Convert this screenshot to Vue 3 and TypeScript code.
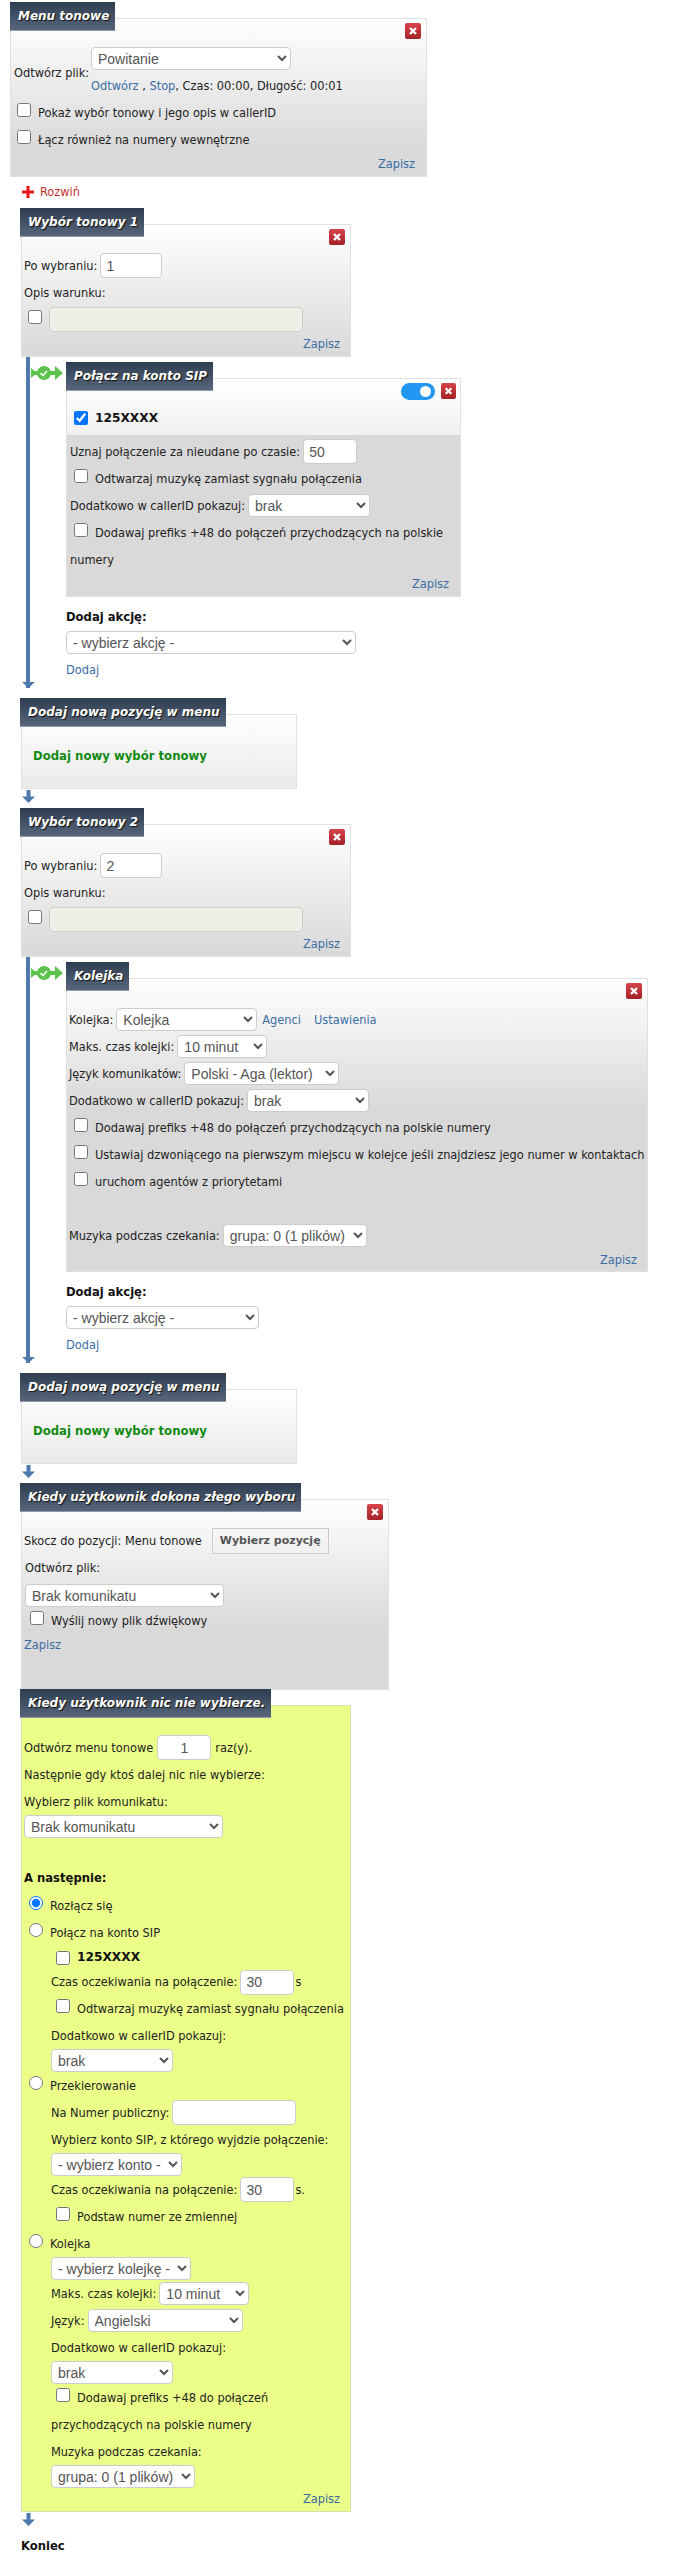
<script setup lang="ts">
const none: string[] = []
void none
</script>

<template>
  <div class="page">
    <div class="block first">
      <div class="title">Menu tonowe</div>
      <div class="panel w417 pad26 p4">
        <span class="close"><svg viewBox="0 0 16 16"><path d="M5 5l6 6M11 5l-6 6" /></svg></span>
        <div class="file">
          <span class="file-label">Odtwórz plik:</span>
          <div>
            <div class="row"><select class="w200"><option>Powitanie</option></select></div>
            <div class="row"><span><a>Odtwórz</a> , <a>Stop</a>, Czas: 00:00, Długość: 00:01</span></div>
          </div>
        </div>
        <div class="row"><input type="checkbox" class="chk m3" /><span>Pokaż wybór tonowy i jego opis w callerID</span></div>
        <div class="row"><input type="checkbox" class="chk m3" /><span>Łącz również na numery wewnętrzne</span></div>
        <div class="save right"><a>Zapisz</a></div>
      </div>
    </div>

    <div class="expand">
      <svg class="plus" viewBox="0 0 12 12"><path d="M4.500 0h3v4.500H12v3H7.500V12h-3V7.500H0v-3h4.500z" /></svg>
      <span>Rozwiń</span>
    </div>

    <div class="block">
      <div class="title">Wybór tonowy 1</div>
      <div class="panel w330 pad27 p3">
        <span class="close"><svg viewBox="0 0 16 16"><path d="M5 5l6 6M11 5l-6 6" /></svg></span>
        <div class="row"><span>Po wybraniu:</span><input class="field w62" value="1" /></div>
        <div class="row">Opis warunku:</div>
        <div class="row"><input type="checkbox" class="chk m4" /><input class="field off w254" disabled /></div>
        <div class="save right"><a>Zapisz</a></div>
      </div>
    </div>

    <div class="sub">
      <svg class="link" viewBox="0 0 32 18"><path class="bar" d="M1 9h26" /><path class="fill" d="M0 4l6 5-6 5z" /><path class="fill" d="M24 2l8 7-8 7z" /><circle class="fill" cx="13" cy="9" r="7" /><path class="tick" d="M9.500 9l2.500 2.500 4-4.500" /></svg>
      <div class="title">Połącz na konto SIP</div>
      <div class="panel w395 sip">
        <span class="toggle"></span>
        <span class="close near"><svg viewBox="0 0 16 16"><path d="M5 5l6 6M11 5l-6 6" /></svg></span>
        <div class="sip-head">
          <input type="checkbox" class="chk m4" checked />
          <b class="num">125XXXX</b>
        </div>
        <div class="sip-body">
          <div class="row"><span>Uznaj połączenie za nieudane po czasie:</span><input class="field w54" value="50" /></div>
          <div class="row"><input type="checkbox" class="chk m4" /><span>Odtwarzaj muzykę zamiast sygnału połączenia</span></div>
          <div class="row"><span>Dodatkowo w callerID pokazuj:</span><select class="w122"><option>brak</option></select></div>
          <div class="row"><input type="checkbox" class="chk m4" /><span>Dodawaj prefiks +48 do połączeń przychodzących na polskie</span></div>
          <div class="row">numery</div>
          <div class="save right"><a>Zapisz</a></div>
        </div>
      </div>
      <div class="add">
        <div class="row"><b class="strong">Dodaj akcję:</b></div>
        <div class="row tight"><select class="w290"><option>- wybierz akcję -</option></select></div>
        <div class="row link-row"><a>Dodaj</a></div>
      </div>
      <svg class="tip" viewBox="0 0 13 8"><path d="M0 2h13L6.500 8z" /></svg>
    </div>

    <div class="block gap10">
      <div class="title">Dodaj nową pozycję w menu</div>
      <div class="panel w276 new"><b>Dodaj nowy wybór tonowy</b></div>
    </div>
    <svg class="down" viewBox="0 0 13 13"><path d="M4.500 0h4v6.500H13L6.500 13 0 6.500h4.500z" /></svg>

    <div class="block gap5">
      <div class="title">Wybór tonowy 2</div>
      <div class="panel w330 pad27 p3">
        <span class="close"><svg viewBox="0 0 16 16"><path d="M5 5l6 6M11 5l-6 6" /></svg></span>
        <div class="row"><span>Po wybraniu:</span><input class="field w62" value="2" /></div>
        <div class="row">Opis warunku:</div>
        <div class="row"><input type="checkbox" class="chk m4" /><input class="field off w254" disabled /></div>
        <div class="save right"><a>Zapisz</a></div>
      </div>
    </div>

    <div class="sub">
      <svg class="link" viewBox="0 0 32 18"><path class="bar" d="M1 9h26" /><path class="fill" d="M0 4l6 5-6 5z" /><path class="fill" d="M24 2l8 7-8 7z" /><circle class="fill" cx="13" cy="9" r="7" /><path class="tick" d="M9.500 9l2.500 2.500 4-4.500" /></svg>
      <div class="title">Kolejka</div>
      <div class="panel w582 pad27 p3">
        <span class="close"><svg viewBox="0 0 16 16"><path d="M5 5l6 6M11 5l-6 6" /></svg></span>
        <div class="row"><span>Kolejka:</span><select class="w141"><option>Kolejka</option></select><a class="after">Agenci</a><a class="after wide">Ustawienia</a></div>
        <div class="row"><span>Maks. czas kolejki:</span><select class="w90"><option>10 minut</option></select></div>
        <div class="row"><span>Język komunikatów:</span><select class="w155"><option>Polski - Aga (lektor)</option></select></div>
        <div class="row"><span>Dodatkowo w callerID pokazuj:</span><select class="w122"><option>brak</option></select></div>
        <div class="row"><input type="checkbox" class="chk m5" /><span>Dodawaj prefiks +48 do połączeń przychodzących na polskie numery</span></div>
        <div class="row"><input type="checkbox" class="chk m5" /><span>Ustawiaj dzwoniącego na pierwszym miejscu w kolejce jeśli znajdziesz jego numer w kontaktach</span></div>
        <div class="row"><input type="checkbox" class="chk m5" /><span>uruchom agentów z priorytetami</span></div>
        <div class="row"></div>
        <div class="row"><span>Muzyka podczas czekania:</span><select class="w144"><option>grupa: 0 (1 plików)</option></select></div>
        <div class="save right short-save"><a>Zapisz</a></div>
      </div>
      <div class="add">
        <div class="row"><b class="strong">Dodaj akcję:</b></div>
        <div class="row tight"><select class="w193"><option>- wybierz akcję -</option></select></div>
        <div class="row link-row"><a>Dodaj</a></div>
      </div>
      <svg class="tip" viewBox="0 0 13 8"><path d="M0 2h13L6.500 8z" /></svg>
    </div>

    <div class="block gap10">
      <div class="title">Dodaj nową pozycję w menu</div>
      <div class="panel w276 new"><b>Dodaj nowy wybór tonowy</b></div>
    </div>
    <svg class="down" viewBox="0 0 13 13"><path d="M4.500 0h4v6.500H13L6.500 13 0 6.500h4.500z" /></svg>

    <div class="block gap5">
      <div class="title">Kiedy użytkownik dokona złego wyboru</div>
      <div class="panel w368 pad27 p3 wrong">
        <span class="close"><svg viewBox="0 0 16 16"><path d="M5 5l6 6M11 5l-6 6" /></svg></span>
        <div class="row"><span>Skocz do pozycji: Menu tonowe</span><button class="pick">Wybierz pozycję</button></div>
        <div class="row in1">Odtwórz plik:</div>
        <div class="row tight in1 pull3"><select class="w199"><option>Brak komunikatu</option></select></div>
        <div class="row pull3"><input type="checkbox" class="chk m7" /><span>Wyślij nowy plik dźwiękowy</span></div>
        <div class="row"><a>Zapisz</a></div>
      </div>
    </div>

    <div class="block lift">
      <div class="title">Kiedy użytkownik nic nie wybierze.</div>
      <div class="panel w330 pad28 p3 lime">
        <div class="row"><span>Odtwórz menu tonowe</span><input class="field w54 mid" value="1" /><span>raz(y).</span></div>
        <div class="row">Następnie gdy ktoś dalej nic nie wybierze:</div>
        <div class="row">Wybierz plik komunikatu:</div>
        <div class="row tight"><select class="w199"><option>Brak komunikatu</option></select></div>
        <div class="row"></div>
        <div class="row"><b class="strong">A następnie:</b></div>
        <div class="row"><input type="radio" name="then" class="chk m5 gap7" checked /><span>Rozłącz się</span></div>
        <div class="row"><input type="radio" name="then" class="chk m5 gap7" /><span>Połącz na konto SIP</span></div>
        <div class="nest">
          <div class="row tight"><input type="checkbox" class="chk m5 flat" /><b class="num">125XXXX</b></div>
          <div class="row short"><span>Czas oczekiwania na połączenie:</span><input class="field w54" value="30" /><span class="flush">s</span></div>
          <div class="row"><input type="checkbox" class="chk m5" /><span>Odtwarzaj muzykę zamiast sygnału połączenia</span></div>
          <div class="row">Dodatkowo w callerID pokazuj:</div>
          <div class="row tight"><select class="w122"><option>brak</option></select></div>
        </div>
        <div class="row"><input type="radio" name="then" class="chk m5 gap7" /><span>Przekierowanie</span></div>
        <div class="nest">
          <div class="row"><span>Na Numer publiczny:</span><input class="field w124" /></div>
          <div class="row">Wybierz konto SIP, z którego wyjdzie połączenie:</div>
          <div class="row tight"><select class="w131"><option>- wybierz konto -</option></select></div>
          <div class="row"><span>Czas oczekiwania na połączenie:</span><input class="field w54" value="30" /><span class="flush">s.</span></div>
          <div class="row"><input type="checkbox" class="chk m5" /><span>Podstaw numer ze zmiennej</span></div>
        </div>
        <div class="row"><input type="radio" name="then" class="chk m5 gap7" /><span>Kolejka</span></div>
        <div class="nest">
          <div class="row tight"><select class="w140"><option>- wybierz kolejkę -</option></select></div>
          <div class="row"><span>Maks. czas kolejki:</span><select class="w90"><option>10 minut</option></select></div>
          <div class="row"><span>Język:</span><select class="w155"><option>Angielski</option></select></div>
          <div class="row">Dodatkowo w callerID pokazuj:</div>
          <div class="row tight"><select class="w122"><option>brak</option></select></div>
          <div class="row"><input type="checkbox" class="chk m5" /><span>Dodawaj prefiks +48 do połączeń</span></div>
          <div class="row">przychodzących na polskie numery</div>
          <div class="row">Muzyka podczas czekania:</div>
          <div class="row tight"><select class="w144"><option>grupa: 0 (1 plików)</option></select></div>
        </div>
        <div class="save right"><a>Zapisz</a></div>
      </div>
    </div>
    <svg class="down" viewBox="0 0 13 13"><path d="M4.500 0h4v6.500H13L6.500 13 0 6.500h4.500z" /></svg>
    <div class="end">Koniec</div>
  </div>
</template>

<style scoped>
.page {
  position: relative;
  width: 687px;
  height: 2560px;
  overflow: hidden;
  box-sizing: border-box;
  padding-top: 2px;
  font: 12.67px/27px "DejaVu Sans Condensed", "Noto Sans", sans-serif;
  color: #222;
}
a { color: #3a6ea5; cursor: pointer; }
b { font-family: "DejaVu Sans", sans-serif; }

.block { margin-left: 20px; }
.block.first { margin-left: 10px; }
.gap10 { margin-top: 10px; }
.gap5 { margin-top: 5px; }
.lift { margin-top: -1px; }

.title {
  position: relative;
  z-index: 1;
  display: table;
  height: 28px;
  margin-bottom: -13px;
  padding: 0 6px 0 8px;
  border-bottom: 1px solid #8d99a8;
  background: linear-gradient(#2e3d4f, #56657a);
  color: #fff;
  font: italic bold 12px/28px "DejaVu Sans", sans-serif;
  text-shadow: 1px 1px 1px #111;
}

.panel {
  position: relative;
  box-sizing: border-box;
  margin-left: 1px;
  border: 1px solid #e0e0e0;
  background: #d9d9d9 linear-gradient(#fff, #d9d9d9) top / 100% 130px no-repeat;
}
.first .panel { margin-left: 0; }
.w417 { width: 417px; }
.w330 { width: 330px; }
.w395 { width: 395px; margin-left: 0; }
.w582 { width: 582px; margin-left: 0; }
.w276 { width: 276px; }
.w368 { width: 368px; }
.pad26 { padding-top: 26px; }
.pad27 { padding-top: 27px; }
.pad28 { padding-top: 28px; }
.p3 { padding-left: 2px; padding-right: 2px; }
.p4 { padding-left: 3px; padding-right: 3px; }

.close {
  position: absolute;
  top: 4px;
  right: 5px;
  width: 16px;
  height: 16px;
  border-radius: 2px;
  background: linear-gradient(#d8434a, #a32228);
}
.close.near { top: 4px; right: 4px; width: 15px; }
.close svg { display: block; width: 100%; height: 100%; }
.close path { fill: none; stroke: #fff; stroke-width: 2.4; }

.row {
  display: flex;
  align-items: center;
  min-height: 27px;
  white-space: nowrap;
}
.row.tight { min-height: 23px; line-height: 23px; }
.row.short { min-height: 26px; line-height: 26px; }
.row > select, .row > .field { margin-left: 3px; }
.row.tight > select, .file .row > select { margin-left: 0; }

select, .field {
  box-sizing: border-box;
  height: 23px;
  border: 1px solid #ccc;
  border-radius: 4px;
  background-color: #fff;
  color: #555;
  font: 14px "Liberation Sans", Arial, sans-serif;
  padding: 0 2px;
}
.field { height: 25px; padding: 0 5px; }
.field.off { margin-left: 0; background: #efefe8; }
.field.mid { text-align: center; margin: 0 4px; }

.w54 { width: 54px; }
.w62 { width: 62px; }
.w90 { width: 90px; }
.w122 { width: 122px; }
.w124 { width: 124px; }
.w131 { width: 131px; }
.w140 { width: 140px; }
.w141 { width: 141px; }
.w144 { width: 144px; }
.w155 { width: 155px; }
.w193 { width: 193px; }
.w199 { width: 199px; }
.w200 { width: 200px; }
.w254 { width: 254px; }
.w290 { width: 290px; }

.chk {
  flex: none;
  width: 14px;
  height: 14px;
  margin: 0 7px 5px 4px;
}
.chk.flat { margin-bottom: 0; }
.m3 { margin-left: 3px; }
.m4 { margin-left: 4px; }
.m5 { margin-left: 5px; }
.m7 { margin-left: 6px; }
.gap7 { margin-right: 7px; }

.file { display: flex; align-items: center; }
.file-label { width: 77px; flex: none; white-space: nowrap; }

.save { height: 23px; line-height: 21px; }
.short-save { height: 22px; }
.right { text-align: right; padding-right: 8px; }

.expand {
  display: flex;
  align-items: center;
  height: 29px;
  margin-bottom: 2px;
  margin-left: 22px;
  gap: 6px;
  color: #c9302c;
}
.plus { width: 12px; height: 12px; fill: #e8141a; }

.sub {
  position: relative;
  margin-left: 26px;
  padding: 5px 0 0 36px;
  border-left: 4px solid #4f79ac;
  width: 600px;
}
.link {
  position: absolute;
  left: 1px;
  top: 7px;
  width: 32px;
  height: 18px;
}
.link .bar { fill: none; stroke: #5ec24e; stroke-width: 4; }
.link .fill { fill: #5ec24e; }
.link .tick { fill: none; stroke: #fff; stroke-width: 1.5; }
.tip {
  position: absolute;
  left: -8.5px;
  bottom: 0;
  width: 13px;
  height: 8px;
  fill: #4f79ac;
}

.sip { background: #d9d9d9; height: 219px; }
.toggle {
  position: absolute;
  z-index: 1;
  top: 4px;
  right: 25px;
  width: 34px;
  height: 17px;
  border-radius: 9px;
  background: #2196f3;
}
.toggle::after {
  content: "";
  position: absolute;
  top: 3px;
  right: 4px;
  width: 11px;
  height: 11px;
  border-radius: 50%;
  background: #fff;
}
.sip-head {
  display: flex;
  align-items: center;
  box-sizing: border-box;
  height: 56px;
  padding: 26px 0 4px 3px;
  background: linear-gradient(#fff, #f1f1f1);
}
.sip-head .chk { margin-bottom: 0; margin-left: 4px; }
.sip-body { padding: 3px 3px 0; }
.num { font-size: 12.2px; font-weight: bold; color: #111; }
.strong { font-size: 11.6px; color: #111; }

.add { padding-top: 7px; height: 84px; }
.link-row { margin-top: 2px; }
.after { margin-left: 5px; }
.after.wide { margin-left: 13px; }

.new { height: 75px; padding: 27px 0 0 11px; }
.new b { font-size: 11.7px; line-height: 24px; color: #118a11; }

.down {
  display: block;
  width: 13px;
  height: 13px;
  margin: 1px 0 0 22px;
  fill: #4f79ac;
}

.wrong { height: 191px; }
.in1 { margin-left: 1px; }
.pull3 { position: relative; top: 3px; }
.pick {
  height: 26px;
  margin-left: 10px;
  padding: 0 7px;
  border: 1px solid #ccc;
  background: transparent;
  color: #555;
  font: bold 11px "DejaVu Sans", sans-serif;
}
.lime {
  border-color: #dcdcb0;
  background: #ebff88;
}
.nest { padding-left: 27px; }
.flush { margin-left: 1px; }

.end {
  margin: 7px 0 0 21px;
  font: bold 11.6px/27px "DejaVu Sans", sans-serif;
  color: #111;
}
</style>
